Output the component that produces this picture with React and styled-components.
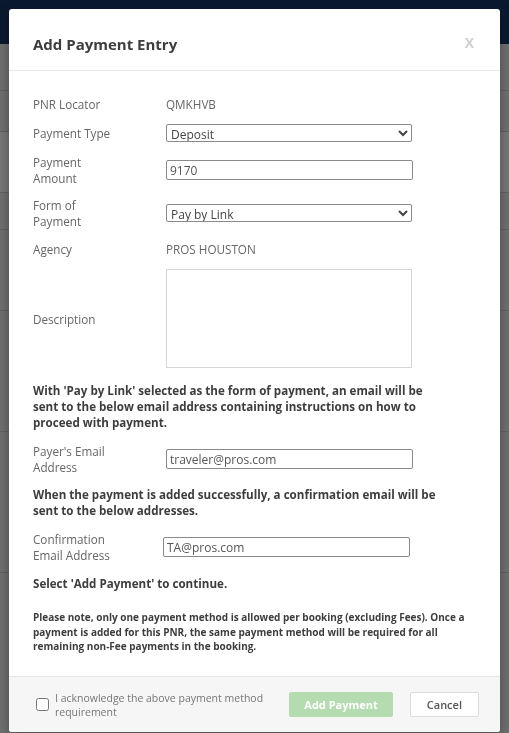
import React, { useState } from 'react'
import styled, { createGlobalStyle } from 'styled-components'

const GlobalStyle = createGlobalStyle`
  html, body {
    margin: 0;
    padding: 0;
    height: 100%;
  }
  body {
    font-family: "Open Sans", "Liberation Sans", Arial, sans-serif;
    background: #6f6f6f;
    overflow: hidden;
  }
`

const Page = styled.div`
  min-height: 733px;
  background: #6f6f6f;
  display: flex;
  flex-direction: column;
`

const TopBar = styled.div`
  height: 44px;
  background: #0b1930;
`

const BackRow = styled.div`
  height: ${p => p.h}px;
  border-bottom: 1px solid #626262;
  background: ${p => (p.light ? '#777' : '#6f6f6f')};
`

const Overlay = styled.div`
  position: fixed;
  inset: 0;
  display: flex;
  align-items: flex-start;
  padding: 9px 0 0 9px;
`

const Modal = styled.div`
  width: 491px;
  background: #fff;
  border-radius: 3px;
  box-shadow: 0 3px 12px rgba(0, 0, 0, 0.35);
  display: flex;
  flex-direction: column;
`

const Header = styled.div`
  display: flex;
  align-items: center;
  justify-content: space-between;
  padding: 23px 26px 14px 24px;
  border-bottom: 1px solid #e8e8e8;
`

const Title = styled.h4`
  margin: 0;
  font-size: 15px;
  line-height: 24px;
  font-weight: 700;
  color: #3d3d3d;
`

const Close = styled.span`
  font-size: 14px;
  font-weight: 700;
  color: #cfcfcf;
  cursor: pointer;
  margin-top: -4px;
`

const Body = styled.div`
  padding: 25px 24px 22px 24px;
  display: flex;
  flex-direction: column;
`

const Row = styled.div`
  display: grid;
  grid-template-columns: ${p => p.offset || 133}px 246px;
  align-items: center;
  margin-bottom: ${p => p.mb ?? 12}px;
`

const Label = styled.div`
  font-size: 11.7px;
  line-height: 16px;
  color: #666;
  width: ${p => p.w || 90}px;
`

const Value = styled.div`
  font-size: 11.7px;
  line-height: 16px;
  color: #666;
`

const Select = styled.select`
  width: 246px;
  height: 18px;
  font-family: inherit;
  font-size: 12px;
  color: #444;
  border: 1px solid #8a8a8a;
  border-radius: 2px;
  background: #fff;
  padding: 0;
  box-sizing: border-box;
`

const Input = styled.input`
  width: 247px;
  height: 20px;
  font-family: inherit;
  font-size: 12px;
  color: #555;
  border: 1px solid #8a8a8a;
  border-radius: 2px;
  padding: 0 3px;
  box-sizing: border-box;
  outline: none;
`

const TextArea = styled.textarea`
  width: 246px;
  height: 99px;
  border: 1px solid #d6d6d6;
  resize: none;
  box-sizing: border-box;
  font-family: inherit;
  outline: none;
`

const Notice = styled.p`
  margin: ${p => p.mt ?? 0}px 0 12px 0;
  max-width: 410px;
  font-size: 11.6px;
  line-height: 16px;
  font-weight: 700;
  color: #3d3d3d;
`

const SmallNote = styled.p`
  margin: 6px 0 0 0;
  font-size: 10px;
  line-height: 14.5px;
  font-weight: 700;
  color: #3d3d3d;
`

const Footer = styled.div`
  display: flex;
  align-items: center;
  background: #f6f6f6;
  border-top: 1px solid #e6e6e6;
  border-radius: 0 0 3px 3px;
  padding: 14px 21px 13px 27px;
`

const Ack = styled.label`
  display: flex;
  align-items: center;
  gap: 6px;
  flex: 1;
  font-size: 10.5px;
  line-height: 14px;
  color: #777;
`

const Check = styled.input`
  width: 13px;
  height: 13px;
  margin: 0;
  flex: none;
`

const Button = styled.button`
  height: 25px;
  padding: 0 ${p => p.px}px;
  margin-left: ${p => p.ml || 0}px;
  border-radius: 2px;
  font-family: inherit;
  font-size: 11px;
  font-weight: ${p => (p.primary ? 700 : 600)};
  color: ${p => (p.primary ? '#fff' : '#555')};
  background: ${p => (p.primary ? '#b4dcb0' : '#fff')};
  border: 1px solid ${p => (p.primary ? '#b4dcb0' : '#dcdcdc')};
  cursor: pointer;
`

export default function App() {
  const [type, setType] = useState('Deposit')
  const [fop, setFop] = useState('Pay by Link')
  const [ack, setAck] = useState(false)

  return (
    <>
      <GlobalStyle />
      <Page>
        <TopBar />
        <BackRow h={46} />
        <BackRow h={40} />
        <BackRow h={60} light />
        <BackRow h={36} />
        <BackRow h={80} />
        <BackRow h={120} />
        <BackRow h={140} />
      </Page>
      <Overlay>
        <Modal>
          <Header>
            <Title>Add Payment Entry</Title>
            <Close>X</Close>
          </Header>
          <Body>
            <Row>
              <Label>PNR Locator</Label>
              <Value>QMKHVB</Value>
            </Row>
            <Row>
              <Label>Payment Type</Label>
              <Select value={type} onChange={e => setType(e.target.value)}>
                <option>Deposit</option>
                <option>Final Payment</option>
              </Select>
            </Row>
            <Row mb={11}>
              <Label w={80}>Payment Amount</Label>
              <Input defaultValue="9170" />
            </Row>
            <Row>
              <Label w={70}>Form of Payment</Label>
              <Select value={fop} onChange={e => setFop(e.target.value)}>
                <option>Pay by Link</option>
                <option>Credit Card</option>
              </Select>
            </Row>
            <Row>
              <Label>Agency</Label>
              <Value>PROS HOUSTON</Value>
            </Row>
            <Row mb={0}>
              <Label>Description</Label>
              <TextArea />
            </Row>
            <Notice mt={15}>
              With 'Pay by Link' selected as the form of payment, an email will be sent to the below
              email address containing instructions on how to proceed with payment.
            </Notice>
            <Row>
              <Label w={90}>Payer's Email Address</Label>
              <Input defaultValue="traveler@pros.com" />
            </Row>
            <Notice>
              When the payment is added successfully, a confirmation email will be sent to the below
              addresses.
            </Notice>
            <Row offset={130} mb={13}>
              <Label w={100}>Confirmation Email Address</Label>
              <Input defaultValue="TA@pros.com" />
            </Row>
            <Notice>Select 'Add Payment' to continue.</Notice>
            <SmallNote>
              Please note, only one payment method is allowed per booking (excluding Fees). Once a
              payment is added for this PNR, the same payment method will be required for all
              remaining non-Fee payments in the booking.
            </SmallNote>
          </Body>
          <Footer>
            <Ack>
              <Check type="checkbox" checked={ack} onChange={e => setAck(e.target.checked)} />
              <span>
                I acknowledge the above payment method
                <br />
                requirement
              </span>
            </Ack>
            <Button primary px={14}>Add Payment</Button>
            <Button px={16} ml={17}>Cancel</Button>
          </Footer>
        </Modal>
      </Overlay>
    </>
  )
}
